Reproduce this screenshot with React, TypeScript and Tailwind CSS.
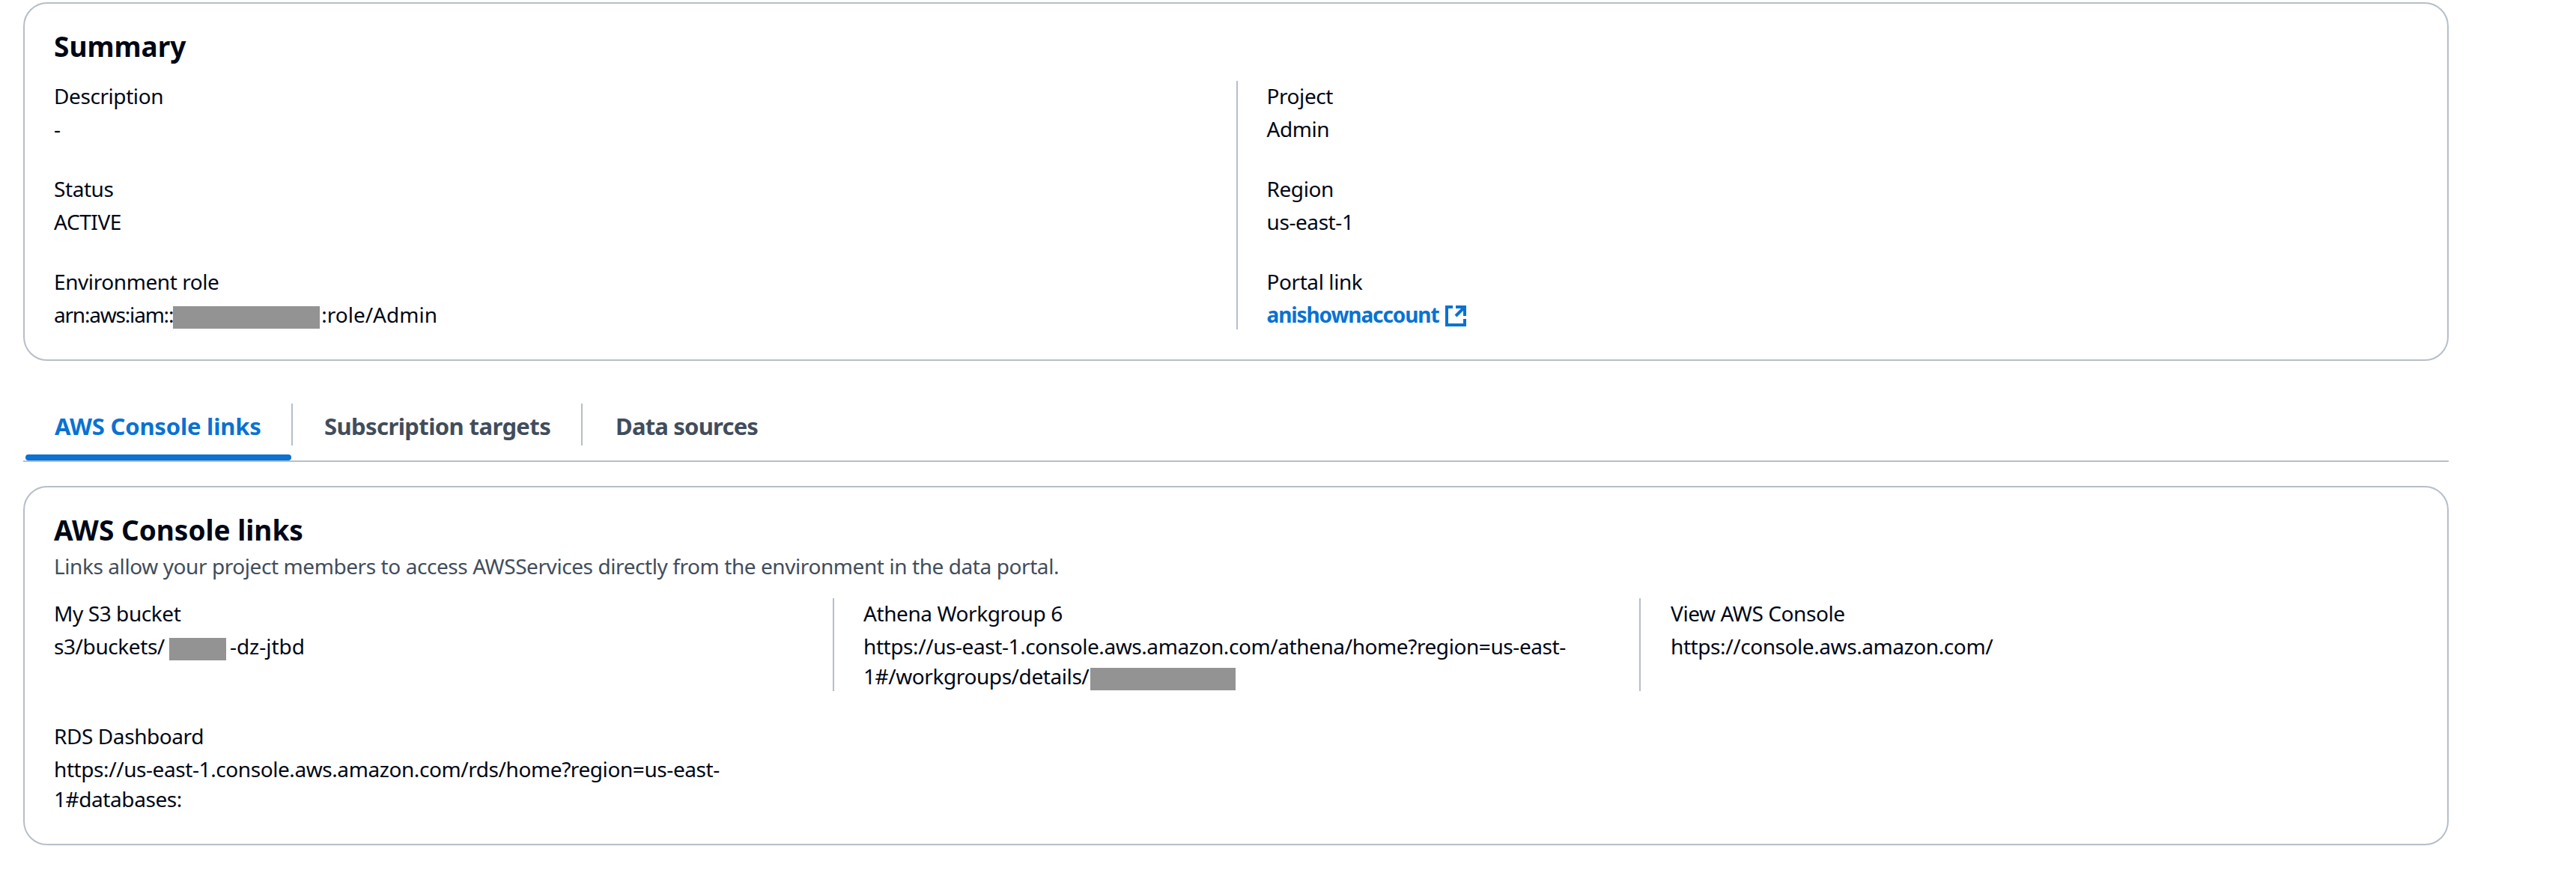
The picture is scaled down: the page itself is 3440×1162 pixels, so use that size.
import React from 'react';

const Redacted = ({ className }: { className: string }) => (
  <span className={`inline-block h-[30px] bg-[#939393] align-[-8px] ${className}`} />
);

const ExternalIcon = () => (
  <svg viewBox="0 0 16 16" fill="none" stroke="currentColor" strokeWidth="2" className="ml-[7px] inline-block h-8 w-8 align-[-7px]">
    <path d="M14 8V2H8" />
    <path d="M14 2 8 8" />
    <path d="M6 2H2v12h12v-4" />
  </svg>
);

const Field = ({ label, children }: { label: string; children: React.ReactNode }) => (
  <div className="flex flex-col gap-[4px]">
    <div>{label}</div>
    <div>{children}</div>
  </div>
);

const App = () => {
  return (
    <div className="min-h-[1162px] w-[3440px] bg-white pt-[3px] pl-[31px] font-['Noto_Sans',sans-serif] text-[28px] leading-[40px] tracking-[-0.42px] text-[#000716]">
      {/* Summary */}
      <div className="h-[479px] w-[3239px] rounded-[32px] border-2 border-[#b6bec9] px-[39px] pt-[35px]">
        <h2 className="text-[37px] leading-[44px] font-bold tracking-normal">Summary</h2>
        <div className="mt-[24px] grid grid-cols-2">
          <div className="flex flex-col gap-[40px]">
            <Field label="Description">-</Field>
            <Field label="Status">ACTIVE</Field>
            <Field label="Environment role">
              <span className="tracking-[-1.2px]">arn:aws:iam::</span>
              <Redacted className="w-[196px]" />
              <span className="ml-[2px] tracking-normal">:role/Admin</span>
            </Field>
          </div>
          <div className="flex flex-col gap-[40px] border-l-2 border-[#b6bec9] pl-[39px]">
            <Field label="Project">Admin</Field>
            <Field label="Region">us-east-1</Field>
            <Field label="Portal link">
              <a className="font-bold tracking-[-1.1px] text-[#0972d3]">
                anishownaccount
                <ExternalIcon />
              </a>
            </Field>
          </div>
        </div>
      </div>

      {/* Tabs */}
      <div className="mt-[57px] flex h-[78px] w-[3239px] border-b-2 border-[#b6bec9] text-[31px] font-bold tracking-[-0.6px] text-[#414d5c]">
        <div className="relative ml-[3px] h-[56px] w-[357px] border-r-2 border-[#b6bec9] pl-[39px] leading-[60px] tracking-[-0.2px] text-[#0972d3]">
          AWS Console links
          <span className="absolute top-[68px] left-0 h-[8px] w-[355px] rounded-[4px] bg-[#0972d3]" />
        </div>
        <div className="h-[56px] w-[387px] border-r-2 border-[#b6bec9] pl-[42px] leading-[60px]">Subscription targets</div>
        <div className="h-[56px] pl-[44px] leading-[60px] tracking-[-0.8px]">Data sources</div>
      </div>

      {/* AWS Console links */}
      <div className="mt-[32px] h-[480px] w-[3239px] rounded-[32px] border-2 border-[#b6bec9] px-[39px] pt-[35px]">
        <h2 className="text-[37px] leading-[44px] font-bold tracking-normal">AWS Console links</h2>
        <p className="mt-[6px] text-[#414d5c]">Links allow your project members to access AWSServices directly from the environment in the data portal.</p>
        <div className="mt-[23px] grid grid-cols-[1040px_1077px_1fr]">
          <Field label="My S3 bucket">
            s3/buckets/<Redacted className="ml-[6px] w-[76px]" />
            <span className="ml-[5px] tracking-normal">-dz-jtbd</span>
          </Field>
          <div className="border-l-2 border-[#b6bec9] pl-[39px]">
            <Field label="Athena Workgroup 6">
              https://us-east-1.console.aws.amazon.com/athena/home?region=us-east-
              <br />
              1#/workgroups/details/<Redacted className="ml-[2px] w-[194px]" />
            </Field>
          </div>
          <div className="border-l-2 border-[#b6bec9] pl-[40px]">
            <Field label="View AWS Console">https://console.aws.amazon.com/</Field>
          </div>
          <div className="mt-[40px]">
            <Field label="RDS Dashboard">
              https://us-east-1.console.aws.amazon.com/rds/home?region=us-east-
              <br />
              1#databases:
            </Field>
          </div>
        </div>
      </div>
    </div>
  );
};

export default App;
